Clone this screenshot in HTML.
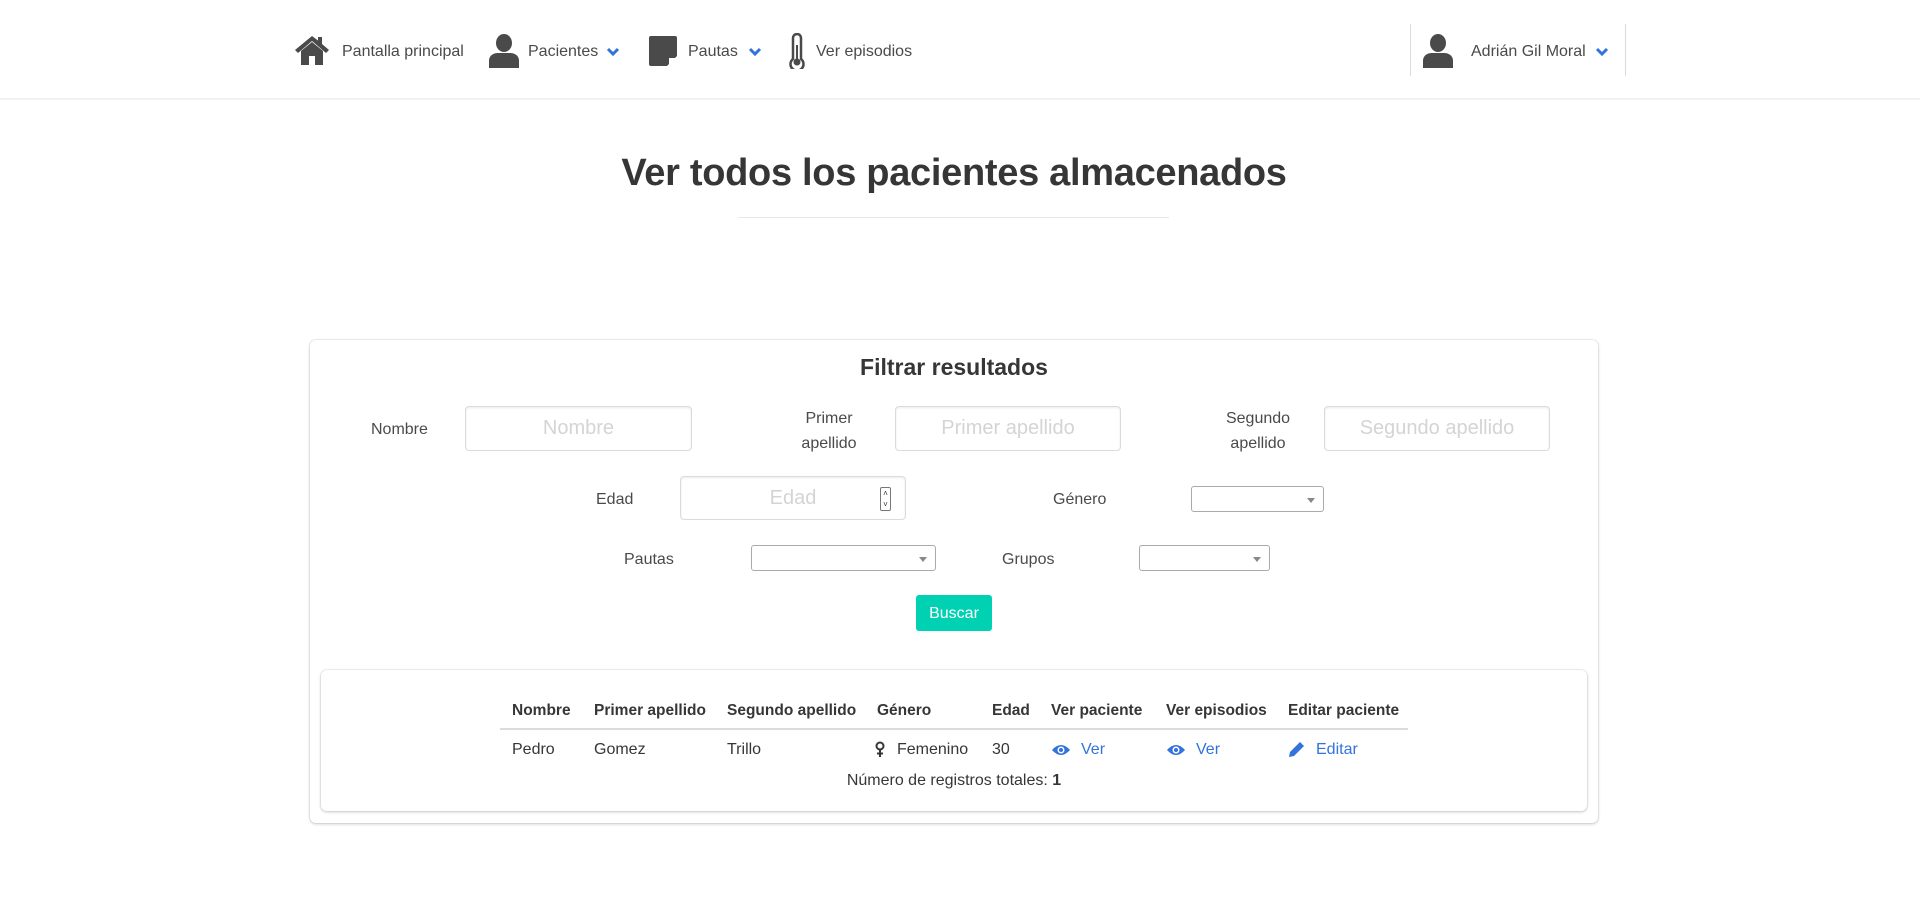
<!DOCTYPE html>
<html><head><meta charset="utf-8"><style>
*{box-sizing:border-box;margin:0;padding:0}
body{width:1920px;height:915px;background:#fff;font-family:"Liberation Sans",sans-serif;color:#363636;position:relative;overflow:hidden;font-size:16px}
.a{position:absolute;white-space:nowrap}
.nav{position:absolute;left:0;top:0;width:1920px;height:100px;border-bottom:2px solid #f2f2f2}
.lbl{font-size:16px;color:#4a4a4a}
.inp{position:absolute;border:1px solid #dbdbdb;border-radius:4px;box-shadow:inset 0 1px 2px rgba(10,10,10,.08);color:#d4d4d4;font-size:20px;text-align:center;display:flex;align-items:center;justify-content:center}
.sel{position:absolute;border:1px solid #aaa;border-radius:3px;background:#fff}
.sel:after{content:"";position:absolute;right:8px;top:11px;border-left:4px solid transparent;border-right:4px solid transparent;border-top:5px solid #888}
.th{font-weight:bold;font-size:15.5px;color:#363636}
.blue{color:#3273dc}
</style></head><body>
<div class="nav"></div>
<svg class="a" style="left:294px;top:35px" width="36" height="30" viewBox="0 0 36 30"><path d="M18 1 L1 15 L4 18 L18 6 L32 18 L35 15 L28 9 V2 H24 V5.5 Z" fill="#4a4a4a"/><path d="M7 16 L18 7 L29 16 V30 H21 V21 H15 V30 H7 Z" fill="#4a4a4a"/></svg>
<div class="a lbl" style="left:342px;top:43px">Pantalla principal</div>
<svg class="a" style="left:489px;top:34px" width="30" height="34" viewBox="0 0 30 34"><ellipse cx="15" cy="9" rx="8" ry="9" fill="#4a4a4a"/><path d="M0 34 V27 C0 21 5 19 9 19 H21 C25 19 30 21 30 27 V34 Z" fill="#4a4a4a"/></svg>
<div class="a lbl" style="left:528px;top:43px">Pacientes</div>
<svg class="a" style="left:606px;top:47px" width="14" height="10" viewBox="0 0 14 10"><path d="M2 2 L7 7 L12 2" stroke="#3273dc" stroke-width="3" fill="none"/></svg>
<svg class="a" style="left:649px;top:36px" width="28" height="30" viewBox="0 0 28 30"><path d="M0 2 Q0 0 2 0 H26 Q28 0 28 2 V20 L18 30 H2 Q0 30 0 28 Z" fill="#4a4a4a"/><path d="M20 30 V22 H28" fill="#fff"/></svg>
<div class="a lbl" style="left:688px;top:43px">Pautas</div>
<svg class="a" style="left:748px;top:47px" width="14" height="10" viewBox="0 0 14 10"><path d="M2 2 L7 7 L12 2" stroke="#3273dc" stroke-width="3" fill="none"/></svg>
<svg class="a" style="left:788px;top:33px" width="18" height="36" viewBox="0 0 18 36"><path d="M5 26 V5 A4 4 0 0 1 13 5 V26 A6.5 6.5 0 1 1 5 26 Z" stroke="#4a4a4a" stroke-width="2.5" fill="none"/><circle cx="9" cy="29" r="3.5" fill="#4a4a4a"/><rect x="8" y="12" width="2" height="16" fill="#4a4a4a"/></svg>
<div class="a lbl" style="left:816px;top:43px">Ver episodios</div>
<div class="a" style="left:1410px;top:24px;width:1px;height:52px;background:#dbdbdb"></div>
<div class="a" style="left:1625px;top:24px;width:1px;height:52px;background:#dbdbdb"></div>
<svg class="a" style="left:1423px;top:34px" width="30" height="34" viewBox="0 0 30 34"><ellipse cx="15" cy="9" rx="8" ry="9" fill="#4a4a4a"/><path d="M0 34 V27 C0 21 5 19 9 19 H21 C25 19 30 21 30 27 V34 Z" fill="#4a4a4a"/></svg>
<div class="a lbl" style="left:1471px;top:43px">Adrián Gil Moral</div>
<svg class="a" style="left:1595px;top:47px" width="14" height="10" viewBox="0 0 14 10"><path d="M2 2 L7 7 L12 2" stroke="#3273dc" stroke-width="3" fill="none"/></svg>

<div class="a" style="left:0;width:1908px;top:152px;text-align:center;font-size:38px;font-weight:bold;color:#363636;letter-spacing:-0.3px">Ver todos los pacientes almacenados</div>
<div class="a" style="left:738px;top:217px;width:431px;height:1px;background:#e8e8e8"></div>

<div class="a" style="left:310px;top:340px;width:1288px;height:483px;border-radius:6px;box-shadow:0 1px 3px rgba(10,10,10,.2),0 0 0 1px rgba(10,10,10,.05)"></div>
<div class="a" style="left:310px;width:1288px;top:354px;text-align:center;font-size:23px;font-weight:bold">Filtrar resultados</div>

<div class="a lbl" style="left:371px;top:421px">Nombre</div>
<div class="inp" style="left:465px;top:406px;width:227px;height:45px">Nombre</div>
<div class="a lbl" style="left:779px;width:100px;text-align:center;top:406px;line-height:25px">Primer<br>apellido</div>
<div class="inp" style="left:895px;top:406px;width:226px;height:45px">Primer apellido</div>
<div class="a lbl" style="left:1208px;width:100px;text-align:center;top:406px;line-height:25px">Segundo<br>apellido</div>
<div class="inp" style="left:1324px;top:406px;width:226px;height:45px">Segundo apellido</div>

<div class="a lbl" style="left:596px;top:491px">Edad</div>
<div class="inp" style="left:680px;top:476px;width:226px;height:44px">Edad</div>
<div class="a" style="left:880px;top:487px;width:11px;height:24px;border:1px solid #777;border-radius:2px;font-size:8px;line-height:11px;text-align:center;color:#333">˄<br>˅</div>
<div class="a lbl" style="left:1053px;top:491px">Género</div>
<div class="sel" style="left:1191px;top:486px;width:133px;height:26px"></div>

<div class="a lbl" style="left:624px;top:551px">Pautas</div>
<div class="sel" style="left:751px;top:545px;width:185px;height:26px"></div>
<div class="a lbl" style="left:1002px;top:551px">Grupos</div>
<div class="sel" style="left:1139px;top:545px;width:131px;height:26px"></div>

<div class="a" style="left:916px;top:595px;width:76px;height:36px;background:#00d1b2;border-radius:3px;color:#fff;font-size:16px;text-align:center;line-height:38px">Buscar</div>

<div class="a" style="left:321px;top:670px;width:1266px;height:141px;border-radius:6px;box-shadow:0 1px 3px rgba(10,10,10,.2),0 0 0 1px rgba(10,10,10,.05)"></div>
<div class="a th" style="left:512px;top:702px">Nombre</div>
<div class="a th" style="left:594px;top:702px">Primer apellido</div>
<div class="a th" style="left:727px;top:702px">Segundo apellido</div>
<div class="a th" style="left:877px;top:702px">Género</div>
<div class="a th" style="left:992px;top:702px">Edad</div>
<div class="a th" style="left:1051px;top:702px">Ver paciente</div>
<div class="a th" style="left:1166px;top:702px">Ver episodios</div>
<div class="a th" style="left:1288px;top:702px">Editar paciente</div>
<div class="a" style="left:500px;top:728px;width:908px;height:2px;background:#dbdbdb"></div>
<div class="a" style="left:512px;top:741px">Pedro</div>
<div class="a" style="left:594px;top:741px">Gomez</div>
<div class="a" style="left:727px;top:741px">Trillo</div>
<svg class="a" style="left:875px;top:741px" width="10" height="17" viewBox="0 0 10 17"><circle cx="5" cy="5" r="3.5" stroke="#363636" stroke-width="2" fill="none"/><path d="M5 8.5 V16 M2 12.5 H8" stroke="#363636" stroke-width="2"/></svg>
<div class="a" style="left:897px;top:741px">Femenino</div>
<div class="a" style="left:992px;top:741px">30</div>
<svg class="a" style="left:1051px;top:743px" width="20" height="14" viewBox="0 0 20 14"><path d="M1 7 Q10 -3 19 7 Q10 17 1 7 Z" fill="#3273dc"/><circle cx="10" cy="7" r="3.5" fill="#fff"/><circle cx="10" cy="7" r="2" fill="#3273dc"/></svg>
<div class="a blue" style="left:1081px;top:741px">Ver</div>
<svg class="a" style="left:1166px;top:743px" width="20" height="14" viewBox="0 0 20 14"><path d="M1 7 Q10 -3 19 7 Q10 17 1 7 Z" fill="#3273dc"/><circle cx="10" cy="7" r="3.5" fill="#fff"/><circle cx="10" cy="7" r="2" fill="#3273dc"/></svg>
<div class="a blue" style="left:1196px;top:741px">Ver</div>
<svg class="a" style="left:1288px;top:741px" width="17" height="17" viewBox="0 0 17 17"><path d="M1 16 L2 11 L12 1 L16 5 L6 15 Z" fill="#3273dc"/></svg>
<div class="a blue" style="left:1316px;top:741px">Editar</div>
<div class="a" style="left:310px;width:1288px;top:772px;text-align:center">Número de registros totales: <b>1</b></div>
</body></html>
